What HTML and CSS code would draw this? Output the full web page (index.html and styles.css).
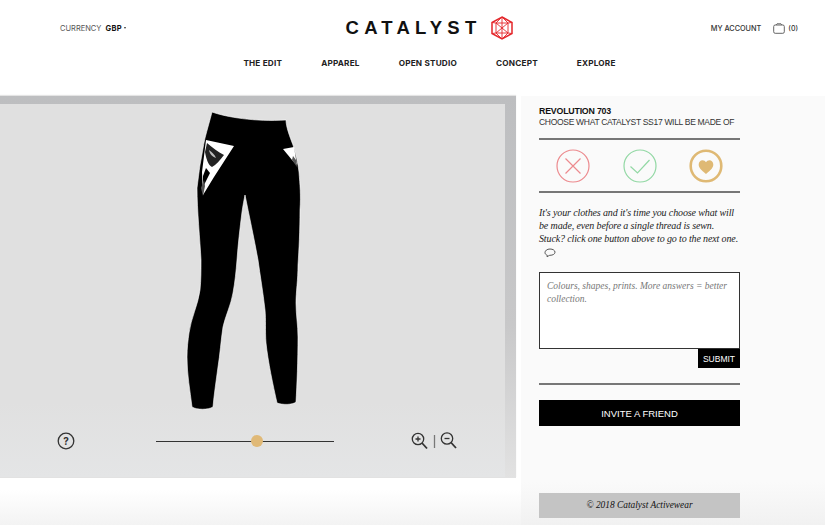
FILE: index.html
```html
<!DOCTYPE html>
<html lang="en">
<head>
  <meta charset="UTF-8">
  <title>Catalyst Activewear</title>
  <link rel="stylesheet" href="styles.css">
</head>
<body>
  <header class="site-header">
    <div class="header-top">
      <div class="currency">CURRENCY <b>GBP</b><span class="caret"></span></div>
      <div class="logo">
        <span class="logo-text">CATALYST</span>
        <svg class="logo-mark" width="24" height="26" viewBox="0 0 24 26" fill="none" stroke="#e4262a" stroke-width=".9">
          <path d="M12 2 22 7.500V18.500L12 24 2 18.500V7.500Z" stroke-width="1.500"/>
          <path d="M12 2 6 8V18L12 24 18 18V8ZM6 8H18M6 18H18M12 2V24M6 8 18 18M18 8 6 18M2 7.500 6 8M22 7.500 18 8M2 18.500 6 18M22 18.500 18 18"/>
        </svg>
      </div>
      <div class="account">
        <span class="account-link">MY ACCOUNT</span>
        <svg class="bag" width="12" height="11" viewBox="0 0 12 11" fill="none" stroke="#666" stroke-width="1">
          <path d="M3 2 4 .8H8L9 2"/>
          <rect x=".7" y="2" width="10.600" height="8.300" rx="1.500"/>
        </svg>
        <span class="bag-count">(0)</span>
      </div>
    </div>
    <nav class="main-nav">
      <a>THE EDIT</a>
      <a>APPAREL</a>
      <a>OPEN STUDIO</a>
      <a>CONCEPT</a>
      <a>EXPLORE</a>
    </nav>
  </header>

  <main class="content">
    <section class="stage">
      <div class="stage-inner">
        <svg class="garment" width="505" height="325" viewBox="0 104 505 325">
          <path fill="#000" stroke="#fff" stroke-width=".6" stroke-linejoin="round" d="M212 112C226 117 255 122 286 120C286 127 290 137 293 145C296 155 298 163 299 172C300 185 301 195 300 210C300 230 299 250 298 265C298 280 296 292 296 303C296 315 298 325 298 337C298 360 297 385 296 402C293 405 282 405 277 403C273 385 268 362 266 343C265 330 266 320 265 310C263 292 260 275 258 260C254 238 249 215 245 195C244 200 243 205 242 212C240 228 238 245 237 260C236 272 235 282 233 293C231 305 225 317 223 327C221 340 220 355 218 367C216 382 214 395 213 407C208 410 197 410 192 407C190 390 187 375 187 357C187 348 188 340 189 333C191 318 198 305 200 290C201 280 201 270 201 260C200 240 197 210 197 188C198 180 199 172 200 165C202 155 203 147 205 138C207 130 210 120 212 112Z"/>
          <path fill="#fff" d="M206 140 234 146 214 177 203 195 202 172Z"/>
          <path fill="#222" d="M207 143C212 147 218 152 224 155 220 160 216 165 212 167 208 165 206 158 205 152Z"/>
          <path fill="#fff" d="M209 150C212 152 215 155 216 158 213 157 210 155 209 150Z" opacity=".7"/>
          <path fill="#000" d="M203 176 206 168 210 173 203 187Z"/>
          <path fill="#555" d="M201 188 204 180 205 186 203 196Z"/>
          <path fill="#fff" d="M283 149 294 147 297 165 292 160Z"/>
          <path fill="#555" d="M293 156 296 160 297 167 292 160Z"/>
        </svg>
        <div class="controls">
          <svg class="help" width="18" height="18" viewBox="0 0 18 18">
            <circle cx="9" cy="9" r="7.800" fill="none" stroke="#333" stroke-width="1.300"/>
            <text x="9" y="12.500" text-anchor="middle">?</text>
          </svg>
          <div class="slider"><span class="thumb"></span></div>
          <svg class="zoom-tools" width="50" height="18" viewBox="0 0 50 18" fill="none" stroke="#333" stroke-width="1.300">
            <circle cx="7" cy="7" r="5.700"/>
            <path d="M11 11 16 16.500" stroke-width="1.800"/>
            <path d="M4.500 7H9.500M7 4.500V9.500"/>
            <path d="M23.500 3V16" stroke="#777"/>
            <circle cx="36" cy="6.500" r="5.700"/>
            <path d="M40 10.500 45 16" stroke-width="1.800"/>
            <path d="M33.500 6.500H38.500"/>
          </svg>
        </div>
      </div>
    </section>

    <aside class="panel">
      <h1 class="panel-title">REVOLUTION 703</h1>
      <p class="panel-sub">CHOOSE WHAT CATALYST SS17 WILL BE MADE OF</p>

      <div class="votes">
        <svg width="34" height="34" viewBox="0 0 34 34" fill="none" stroke="#ec8a8e" stroke-width="1.200">
          <circle cx="17" cy="17" r="16"/>
          <path d="M9.500 9.500 24.500 24.500M24.500 9.500 9.500 24.500"/>
        </svg>
        <svg width="34" height="34" viewBox="0 0 34 34" fill="none" stroke="#92d8a4" stroke-width="1.200">
          <circle cx="17" cy="17" r="16"/>
          <path d="M7.500 17.500 14.500 24 26.500 11"/>
        </svg>
        <svg width="34" height="34" viewBox="0 0 34 34">
          <circle cx="17" cy="17" r="15.300" fill="none" stroke="#dfb974" stroke-width="2.600"/>
          <path fill="#dfb974" d="M17 25C12 21 9.700 18.600 9.700 15.500 9.700 13 11.500 11.300 13.500 11.300 15 11.300 16.300 12 17 13.300 17.700 12 19 11.300 20.500 11.300 22.500 11.300 24.300 13 24.300 15.500 24.300 18.600 22 21 17 25Z"/>
        </svg>
      </div>

      <p class="intro">It's your clothes and it's time you choose what will be made, even before a single thread is sewn. Stuck? click one button above to go to the next one.</p>
      <svg class="chat" width="12" height="10" viewBox="0 0 12 10" fill="none" stroke="#444" stroke-width=".9">
        <path d="M3 8.800 3.300 7.300C1.800 6.700 1 5.800 1 4.600 1 2.700 3 1 6 1 8.900 1 11 2.400 11 4.200 11 6.100 8.700 7.300 6 7.300 5 7.300 4.200 8.300 3 8.800Z"/>
      </svg>

      <form class="answer-form">
        <textarea class="answer" placeholder="Colours, shapes, prints. More answers = better collection."></textarea>
        <button class="submit" type="button">SUBMIT</button>
      </form>

      <button class="invite" type="button">INVITE A FRIEND</button>
      <div class="copyright">© 2018 Catalyst Activewear</div>
    </aside>
  </main>
</body>
</html>
```

FILE: styles.css
```css
html, body {
  margin: 0;
  height: 525px;
  overflow: hidden;
}

body {
  background: linear-gradient(#fff, #fff 490px, #f3f3f3);
  font-family: "Inter", "Liberation Sans", sans-serif;
  color: #000;
}

/* header */
.site-header {
  height: 96px;
  box-sizing: border-box;
  padding-top: 15px;
  background: #fff;
}

.header-top {
  display: grid;
  grid-template-columns: 1fr auto 1fr;
  align-items: center;
  height: 26px;
  padding: 0 27px 0 60px;
}

.currency {
  font-size: 7.500px;
  color: #555;
  display: flex;
  align-items: center;
  white-space: pre;
}

.currency b {
  margin-left: 2px;
  color: #111;
  letter-spacing: .3px;
}

.caret {
  margin-left: 2px;
  border: 1.500px solid transparent;
  border-top: 2px solid #333;
  border-bottom: 0;
}

.logo {
  display: flex;
  align-items: center;
  gap: 13px;
  margin-left: 2px;
}

.logo-text {
  font-family: "Liberation Sans", sans-serif;
  font-weight: bold;
  font-size: 18.500px;
  letter-spacing: 5.200px;
  color: #111;
  margin-right: -4px;
}

.account {
  display: flex;
  align-items: center;
  justify-content: flex-end;
  font-size: 7.300px;
  color: #333;
}

.account-link {
  font-weight: 500;
  margin-right: 12px;
}

.bag {
  margin-right: 3px;
}

.bag-count {
  font-weight: 500;
  font-size: 7px;
}

.main-nav {
  display: flex;
  justify-content: center;
  gap: 39px;
  margin-top: 17px;
  padding-left: 34px;
  font-size: 8.200px;
  font-weight: 700;
  letter-spacing: .2px;
  color: #222;
}

/* main area */
.content {
  display: grid;
  grid-template-columns: 521px minmax(0, 1fr);
  height: 429px;
}

.stage {
  height: 382px;
  width: 516px;
  box-sizing: border-box;
  background: linear-gradient(#bdbec0, #c8c8c9 60%, #e2e2e2);
  padding: 8px 11px 0 0;
  box-shadow: 0 -1px 1px #e4e4e4;
}

.stage-inner {
  height: 373px;
  background: linear-gradient(#e0e0e0, #e0e0e0 80%, #e4e5e6);
}

.garment {
  display: block;
}

.controls {
  display: flex;
  align-items: center;
  padding: 0 0 0 57px;
  height: 24px;
}

.help text {
  font-size: 10px;
  font-weight: 700;
  fill: #333;
}

.slider {
  position: relative;
  width: 178px;
  height: 1px;
  margin-left: 81px;
  background: #333;
}

.thumb {
  position: absolute;
  left: 95px;
  top: -6px;
  width: 12px;
  height: 12px;
  border-radius: 50%;
  background: #e0b977;
}

.zoom-tools {
  margin-left: 77px;
}

/* right panel */
.panel {
  background: linear-gradient(#fafafa, #fafafa 90%, #f1f1f1);
  padding: 10px 85px 0 18px;
  display: flex;
  flex-direction: column;
  font-family: "Liberation Sans", sans-serif;
}

.panel-title {
  margin: 0;
  font-size: 8.800px;
  line-height: 11px;
  font-weight: bold;
  letter-spacing: -.2px;
  color: #111;
}

.panel-sub {
  margin: 0;
  font-size: 8.500px;
  line-height: 11px;
  letter-spacing: -.3px;
  color: #333;
  white-space: nowrap;
}

.votes {
  display: flex;
  justify-content: space-between;
  align-items: center;
  height: 51px;
  margin-top: 10px;
  padding: 0 17px;
  border-top: 2px solid #777;
  border-bottom: 2px solid #777;
}

.intro {
  margin: 13px 0 0;
  font-family: "Liberation Serif", serif;
  font-style: italic;
  font-size: 10px;
  line-height: 13px;
  letter-spacing: -.13px;
  color: #222;
}

.chat {
  margin: 3px 0 0 5px;
  display: block;
}

.answer-form {
  display: flex;
  flex-direction: column;
  align-items: flex-end;
  margin-top: 14px;
  padding-bottom: 15px;
  border-bottom: 2px solid #777;
}

.answer {
  display: block;
  width: 100%;
  height: 77px;
  box-sizing: border-box;
  margin: 0;
  padding: 7px 4px 7px 7px;
  border: 1.500px solid #333;
  border-radius: 0;
  background: #fff;
  resize: none;
  font-family: "Liberation Serif", serif;
  font-style: italic;
  font-size: 9.500px;
  line-height: 13px;
}

.answer::placeholder {
  color: #777;
  opacity: 1;
}

.submit {
  width: 42px;
  height: 19px;
  margin-top: 0;
  padding: 0;
  border: none;
  background: #000;
  color: #fff;
  font-family: "Liberation Sans", sans-serif;
  font-size: 8.500px;
}

.invite {
  height: 26px;
  margin-top: 15px;
  padding: 0;
  border: none;
  background: #000;
  color: #fff;
  font-family: "Liberation Sans", sans-serif;
  font-size: 9.500px;
}

.copyright {
  height: 25px;
  margin-top: 67px;
  background: #c4c4c4;
  color: #111;
  font-family: "Liberation Serif", serif;
  font-style: italic;
  font-size: 9.400px;
  line-height: 25px;
  text-align: center;
}
```
